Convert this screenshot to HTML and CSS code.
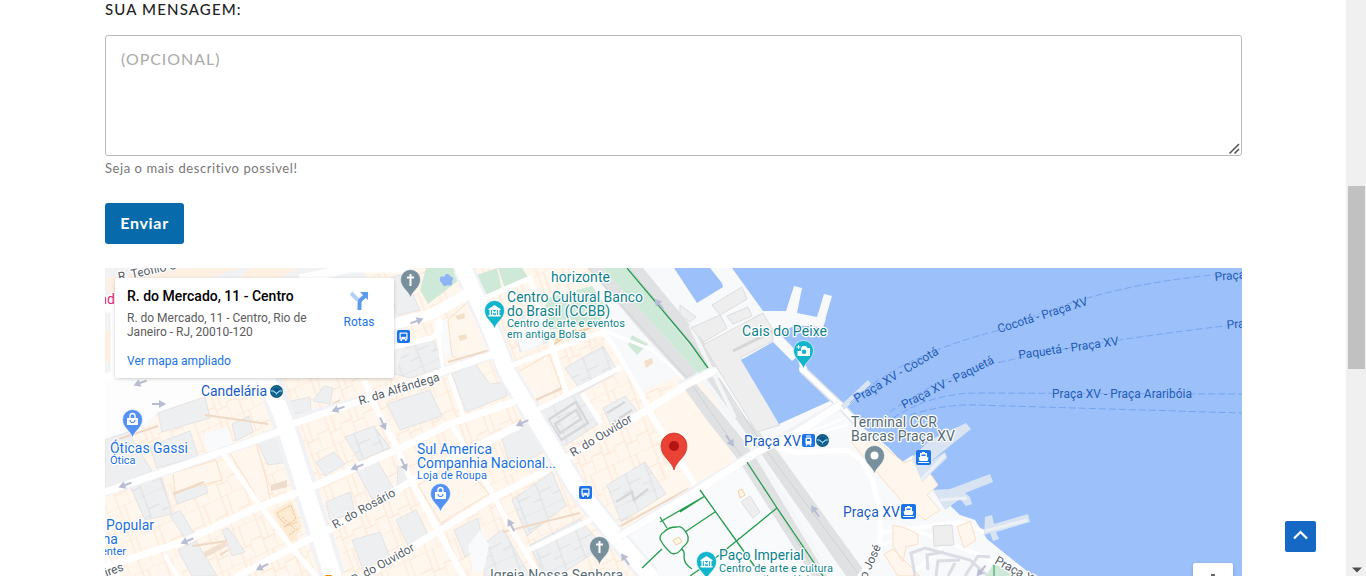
FILE: index.html
```html
<!DOCTYPE html>
<html lang="pt-BR">
<head>
<meta charset="utf-8">
<title>Contato</title>
<link rel="stylesheet" href="styles.css">
</head>
<body>
<div class="page">
<main class="content">
  <form class="form">
    <label class="label" for="msg"><span>SUA MENSAGEM:</span></label>
    <div class="field">
      <textarea class="message" id="msg" placeholder="(OPCIONAL)"></textarea>
      <svg class="grip" width="11" height="11" viewBox="0 0 11 11"><path d="M.5 10.500L10 1M5.500 10.500L10 6" stroke="#505050" stroke-width="1.500"/></svg>
    </div>
    <p class="hint">Seja o mais descritivo possivel!</p>
    <button class="submit" type="button">Enviar</button>
  </form>
  <section class="map">
    <svg class="map-canvas" viewBox="105 268 1137 308" width="1137" height="308">
      <defs>
        <pattern id="lots" width="25" height="34" patternUnits="userSpaceOnUse" patternTransform="rotate(-25) skewX(-5)">
          <path d="M0 0H25M0 18H13M13 0V34M0 18V34M19 0V22M13 22H25" class="lot-line"/>
        </pattern>
        <pattern id="lotsg" width="22" height="30" patternUnits="userSpaceOnUse" patternTransform="rotate(-25) skewX(-5)">
          <path d="M0 0H22M9 0V30M9 14H22M0 21H9" class="lot-line-g"/>
        </pattern>
        <path id="pin" d="M0 0C-1.5-7-10-10-10-18.500A10 10 0 0 1 10-18.500C10-10 1.500-7 0 0Z"/>
        <g id="bag"><path d="M-5.500-2H5.500V5H-5.500Z" fill="#fff"/><path d="M-2.500-2V-4A2.500 2.500 0 0 1 2.500-4V-2" fill="none" stroke="#fff" stroke-width="1.400"/><path d="M-2.500 0A2.500 2.500 0 0 0 2.500 0" fill="none" stroke="#5491f5" stroke-width="1.200"/></g>
        <g id="museum"><path d="M-6-2L0-6L6-2V-1H-6ZM-5-1H-3.500V4H-5ZM3.500-1H5V4H3.500ZM-6 4H6V5.500H-6Z" fill="#fff"/><path d="M-2 4V0L0 2L2 0V4" fill="none" stroke="#fff" stroke-width="1.200"/></g>
        <g id="bus"><rect x="-6.500" y="-6.500" width="13" height="13" rx="2" fill="#1a73e8"/><path d="M-4-3Q-4-4-3-4H3Q4-4 4-3V3H3V4.500H1.500V3H-1.500V4.500H-3V3H-4Z" fill="#fff"/><path d="M-2.500-2.500H2.500V0H-2.500ZM-3 1.500H-1.500M1.500 1.500H3" fill="#1a73e8" stroke="#1a73e8" stroke-width=".7"/></g>
        <g id="ferry"><rect x="-7.500" y="-7.500" width="15" height="15" rx="2" fill="#1a73e8"/><path d="M-1.500-5.500H1.500V-4.500H3.500V-.5L5 0L4 3.500H-4L-5 0L-3.500-.5V-4.500H-1.500Z" fill="#fff"/><path d="M-2-3H2V-1.500H-2Z" fill="#1a73e8"/><path d="M-5.500 5H5.500" stroke="#fff"/></g>
        <g id="metro"><circle r="6.500" fill="#0b5490"/><circle r="4.500" fill="none" stroke="#238276"/><path d="M-6-.5H-3L-1.500 1H-1L0 2.500L1 1H1.500L3-.5H6" fill="none" stroke="#9ee1f7" stroke-width="1.100"/></g>
        <path id="arr" d="M-7-1H0V-4L7 0L0 4V1H-7Z" fill="#b9bdd3"/>
        <path id="cross" d="M0-6V6M-3.500-2.500H3.500" stroke="#fff" stroke-width="2" fill="none"/>
      </defs>
      <rect x="105" y="268" width="1137" height="308" fill="#f8f9fb"/>

      <!-- city blocks -->
      <path id="city" class="peach" d="M105 440L150 425L158 412L205 396L264 380L360 268H450L590 268L603 332L640 392L690 370L718 402L735 463L625 528L665 576H105Z"/>
      <path fill="url(#lots)" d="M105 440L150 425L158 412L205 396L264 380L360 268H450L590 268L603 332L640 392L676 384L645 412L675 470L625 528L665 576H105Z"/>

      <!-- grey buildings -->
      <g class="grey">
        <path d="M105 440L128 432L152 471L105 488Z"/><path d="M158 413L205 397L210 418L162 432Z"/><path d="M150 446L190 431L198 456L157 468Z"/>
        <path d="M232 424L249 416L253 432L236 441Z"/><path d="M256 440L276 433L288 462L268 465Z"/><path d="M130 486L161 476L172 514L145 520Z"/>
        <path d="M174 492L205 484L208 493L177 504Z"/><path d="M170 516L180 510L194 534L185 538Z"/><path d="M178 550L196 541L217 576H192Z"/>
        <path d="M222 530L228 528L245 552L232 556Z"/><path d="M316 462L334 452L345 464L325 476Z"/><path d="M345 437L374 426L390 448L359 461Z"/>
        <path d="M326 502L350 492L355 513L330 520Z"/><path d="M356 470L378 462L394 489L372 499Z"/>
        <path d="M287 402L310 397L311 411L287 415Z"/><path d="M313 401L324 386L333 388L330 404Z"/><path d="M352 540L380 532L393 565L365 576Z"/>
        <path d="M395 352L432 338L445 366L410 378L395 374Z"/><path d="M387 404L430 390L442 416L400 430Z"/><path d="M452 374L475 364L490 384L505 382L507 396L466 412Z"/>
        <path d="M515 322L540 305L548 342L520 352Z"/><path d="M565 368L603 346L618 372L582 392Z"/><path d="M542 410L580 391L598 424L560 449Z"/>
        <path d="M603 408L625 396L640 414L614 432Z"/><path d="M607 485L645 462L666 494L621 522Z"/><path d="M512 500L552 472L566 505L527 536Z"/>
        <path d="M530 545L580 519L603 547L558 576H544Z"/><path d="M454 530L478 518L483 545L465 557Z"/><path d="M485 543L503 529L530 576H484Z"/>
        <path d="M396 520L416 510L429 537L409 548Z"/><path d="M398 466L407 472L408 486L397 485Z"/><path d="M500 433L529 423L545 451L511 470Z"/>
        <path d="M390 278L403 274L420 310L396 316Z"/>
      </g>
      <path fill="url(#lotsg)" d="M130 486L161 476L172 514L145 520ZM512 500L552 472L566 505L527 536ZM530 545L580 519L603 547L558 576H544ZM607 485L645 462L666 494L621 522ZM542 410L580 391L598 424L560 449ZM395 352L432 338L445 366L410 378L395 374ZM565 368L603 346L618 372L582 392ZM345 437L374 426L390 448L359 461ZM485 543L503 529L530 576H484Z"/>
      <g fill="#f8fafc">
        <path d="M204 433L228 428L233 443L208 455Z"/><path d="M468 546L480 530L489 545L484 570L474 572Z"/>
        <path d="M436 323L452 317L457 345L446 360Z"/><path d="M513 325L535 318L543 344L522 352Z"/><path d="M620 535L736 468L840 576H650Z"/>
      </g>

      <!-- plain roofs -->
      <g class="peach edge">
        <path d="M515 374L549 354L561 387L531 404Z"/><path d="M448 320L470 300L491 350L468 364L452 356Z"/><path d="M418 485L445 470L466 468L489 494L441 523Z"/>
        <path d="M228 450L255 440L266 478L270 500L260 502Z"/><path d="M173 473L216 460L222 480L175 492Z"/>
      </g>

      <!-- roof edges and courtyards -->
      <path d="M119 439L158 426M205 415L268 424M192 546L227 541M173 494L204 482M220 555L228 550M448 362L490 350M512 365L550 350M531 402L565 387M440 526L490 500M617 528L688 489M709 480L733 466M503 532L580 513M305 420L340 400" stroke="#efd9c5" stroke-width="2" fill="none"/>
      <path d="M273 512L291 501L302 526L293 543L280 526Z" fill="#fdebd3"/>
      <path d="M277 513L291 505L296 519L287 525L280 519ZM284 527L297 522M289 535L299 528M282 517L295 529" fill="none" stroke="#edc69c" stroke-dasharray="3 1"/>
      <path d="M271 485L287 480V487L271 491Z" fill="#eedccc"/><path d="M204 552L226 541L227 546L205 558Z" fill="#f2dfcf"/>
      <path d="M455 316L464 313L465 318L458 320ZM458 336L466 334L467 339L460 341ZM644 361L652 358L653 363L646 368Z" fill="#f4dfc9"/>
      <path d="M555 340L590 328M553 345L575 330L590 340" stroke="#f5cfa1" stroke-width="2" fill="none"/>
      <path d="M548 420L576 402L588 423L561 440ZM555 424L576 410L581 419L560 433ZM607 413L625 402M614 422L632 410M616 502L632 492L634 500L648 489" stroke="#d6d7d9" stroke-width="2.500" fill="none"/>

      <!-- parks -->
      <g fill="#cee9d7">
        <path d="M426 268H453L459 280L428 304L420 290Z"/><path d="M474 276L497 268L502 291L488 296Z"/><path d="M498 268H522L528 277L505 289Z"/>
        <path d="M550 297L592 286L608 310L598 322L550 330L543 310Z"/><path d="M632 335L648 344L637 355L628 345Z"/>
      </g>
      <path d="M440 278Q441 275 444 277Q447 271 450 276Q455 278 452 281Q453 287 448 285Q443 288 442 283Q439 281 440 278Z" fill="#8eb4f5"/>

      <!-- open ground at the avenue -->
      <path d="M105 378H268L256 394L205 396L158 412L140 428L105 438Z" fill="#fdfdfe"/>
      <path d="M105 268H360L410 330L394 378H105Z" fill="#f1f2f4"/>
      <path d="M105 278L175 268H240L115 310ZM250 268H300L280 278H240ZM105 330H115V360L105 363Z" fill="#fdefe2"/>
      <path d="M105 310L115 302V375L105 378M300 279L350 268H410" fill="none" stroke="#fff" stroke-width="9"/>

      <!-- streets -->
      <g class="casing">
        <path d="M268 378L282 415L303 482L333 576" stroke-width="25"/><path d="M463 268L490 328L507 372L537 422L577 488L617 538L650 576" stroke-width="21"/>
        <path d="M105 492L222 452L278 432L292 420L405 388L447 370L500 352" stroke-width="9"/>
      </g>
      <g class="street">
        <path d="M266 378L282 415L303 482L333 576" stroke-width="17"/>
        <path d="M463 268L490 328L507 372L537 422L577 488L617 538L650 576" stroke-width="16"/>
        <path d="M105 492L222 452L278 432L292 424L405 386L447 370L500 352" stroke-width="7"/>
        <path d="M105 567L185 541L258 507L305 490L397 450L450 424L513 402" stroke-width="7"/>
        <path d="M238 576L292 548L318 535L338 525L405 485L440 465L520 425" stroke-width="7"/>
        <path d="M365 576L440 530L493 498L547 470M562 461L643 412L712 370" stroke-width="7"/>
        <path d="M365 382L378 412L394 442L410 478L437 528L463 576" stroke-width="6"/>
        <path d="M453 427L493 495L513 532L540 576M527 551L590 520" stroke-width="5"/>
        <path d="M222 452L262 508L292 548L316 576" stroke-width="5"/>
        <path d="M105 555L118 576M165 556L178 576" stroke-width="4"/>
        <path d="M436 322L443 368M450 377L463 415" stroke-width="4"/>
        <path d="M390 325L430 315L475 290" stroke-width="11"/><path d="M390 348L432 338L440 330V320" stroke-width="5"/>
        <path d="M487 297L530 278L540 310L553 348L567 395M510 366L553 350L603 332L613 345L640 392L650 411M537 410L567 395L620 368M583 395L600 422" stroke-width="5"/>
        <path d="M603 330L652 350L688 382" stroke-width="3"/><path d="M650 413L695 485" stroke-width="6"/>
      </g>

      <!-- expressway -->
      <g fill="#e0e1e2">
        <path d="M588 268H602L697 372L688 382L640 330Z"/><path d="M629 268H643L690 325L712 352L716 367L708 368Z"/>
        <path d="M681 384L691 378L723 415L750 448L827 576H812L739 461L703 415Z"/><path d="M706 378L716 374L740 412L778 452L868 576H846L761 454Z"/>
      </g>
      <path d="M602 268H627L708 368L698 373Z" fill="#cee9d7"/>
      <path d="M588 268L690 381M629 268L710 366M690 382L770 497L818 576M719 378L766 450L860 576" stroke="#cfd1d3" fill="none"/>
      <path d="M700 374L765 468L830 576M690 325L735 418" stroke="#f5f6f7" stroke-width="4" fill="none"/>

      <!-- waterfront sheds -->
      <g class="shed"><path d="M703 345L763 313L772 328L773 341L741 357L780 425L757 432Z"/><path d="M712 305L742 287L747 299L720 315Z"/><path d="M727 316L748 307L752 316L733 324Z"/><path d="M691 328L720 315L727 328L704 342Z"/><path d="M680 305L696 317L690 322L680 315Z"/></g>
      <path d="M733 351L773 331" stroke="#d3d5d7" stroke-width="3"/>

      <!-- bay -->
      <g fill="#9cc0fa">
        <path d="M674 268L697 303L723 287L722 283L710 268Z"/>
        <path d="M732 268L763 311L786 311L794 286L802 288L797 313L817 317L824 294L832 296L823 327L795 325L780 334L799 354L803 366L853 420L888 447L902 462L913 455L930 486L960 515L975 520L987 539L1033 576H1242V268Z"/>
        <path d="M741 360L773 342L792 361L797 357L802 373L830 401L779 424Z"/>
      </g>
      <path d="M786 312L792 325L776 332Z" fill="#f8f9fb"/>
      <path d="M780 325L796 321L826 319L823 327L795 325L777 333Z" fill="#f8f9fb"/>
      <path d="M803 370L840 405L862 428" stroke="#dfe3e8" stroke-width="8" fill="none"/><path d="M803 370L840 405L862 428" stroke="#fff" stroke-width="5" fill="none"/><circle cx="803" cy="369" r="4" fill="#fff"/>

      <!-- lower roads -->
      <g class="casing"><path d="M620 536L757 452L840 405M680 386L712 372" stroke-width="9"/></g>
      <g class="street">
        <path d="M620 536L690 495L757 452L795 434L840 405M680 388L712 372" stroke-width="7"/>
        <path d="M780 448L798 453L847 450L862 461L872 480L880 508V548L860 576" stroke-width="5"/>
        <path d="M793 440L850 424M810 432L845 418" stroke-width="2"/>
        <path d="M985 532L960 522L885 532M880 545L920 532L980 555L1020 576M910 576L950 540" stroke-width="4"/>
      </g>

      <!-- ferry terminal -->
      <path class="peach edge" d="M852 443L866 432L903 462L920 459L938 485L927 495L940 510L925 520L904 504L880 476Z"/>
      <path class="peach edge" d="M893 525L905 528L918 534L918 544L906 547L903 562L893 546ZM884 554L893 549L920 576H898ZM957 527L970 521L976 540L964 548Z"/>
      <path class="shed" d="M933 526L952 525L954 545L934 546Z"/>
      <g fill="#d9e4f2">
        <path d="M912 458L930 440L966 423L971 429L930 462L945 452L947 458L922 482Z"/><path d="M933 490L950 489L990 474L993 482L965 493L970 497L972 504L966 506L960 499L945 510Z"/>
        <path d="M985 517L992 515L994 524L1028 514L1030 522L996 532L999 539L993 541L990 533L984 535Z"/><path d="M841 405L868 380L871 384L844 410Z"/>
      </g>
      <path d="M985 531L1027 520M940 500L967 498M921 480L945 455" stroke="#edf0f4" stroke-width="3"/>
      <path d="M915 576L911 553L925 548L970 560L988 576M928 570L927 555L944 552M936 576L938 561L960 560M965 576L978 556L990 557M948 576L955 563" fill="none" stroke="#dadde4" stroke-width="3"/>
      <path d="M986 576L994 563L1015 576Z" fill="#cee9d7"/><path d="M994 565V576" stroke="#249c4d"/>

      <!-- plaza paths -->
      <g fill="none" stroke="#249c4d" stroke-width="1.300">
        <path d="M627 268L690 343L708 368M747 462L777 508L823 576"/>
        <path d="M700 490L735 539L755 567M777 508L713 560L690 576M680 512L705 496M660 522L705 496M660 517L667 528M685 532L715 512M642 568L662 549"/>
        <path d="M664 532Q668 527 677 527Q682 525 687 534Q691 541 683 547Q677 556 671 553Q664 547 660 539Q660 534 664 532M681 549Q685 550 684 557Q684 564 692 569"/>
      </g>
      <path d="M673 540L679 537L682 542L676 545ZM738 491L742 489L745 495L740 498Z" fill="#fff5e9" stroke="#f6cf9c"/>
      <path class="shed" d="M741 502L750 496L760 512L753 518Z"/>

      <!-- ferry routes -->
      <g fill="none" stroke="#75a5f0" stroke-dasharray="7 3">
        <path d="M850 403Q900 355 1000 330Q1110 280 1242 273"/><path d="M890 412Q940 375 1010 360Q1100 340 1242 324"/>
        <path d="M893 418Q930 394 975 393L1242 394"/><path d="M910 415Q945 404 975 405L1242 413"/>
      </g>

      <use href="#arr" transform="translate(140 383) rotate(160)"/><use href="#arr" transform="translate(159 404)"/><use href="#arr" transform="translate(125 485) rotate(160)"/>
      <use href="#arr" transform="translate(187 541) rotate(158)"/><use href="#arr" transform="translate(262 567) rotate(153)"/><use href="#arr" transform="translate(338 409) rotate(160)"/>
      <use href="#arr" transform="translate(357 467) rotate(158)"/><use href="#arr" transform="translate(417 321) rotate(-20)"/><use href="#arr" transform="translate(404 465) rotate(65)"/>
      <use href="#arr" transform="translate(383 424) rotate(65)"/><use href="#arr" transform="translate(522 423) rotate(155)"/><use href="#arr" transform="translate(511 525) rotate(-118)"/>
      <use href="#arr" transform="translate(625 559) rotate(-125)"/><use href="#arr" transform="translate(730 441) rotate(55)"/><use href="#arr" transform="translate(815 511) rotate(-125)"/><use href="#arr" transform="translate(659 304) rotate(-130)"/><use href="#arr" transform="translate(981 571) rotate(130)"/>

      <!-- street names -->
      <g class="road">
        <text transform="translate(119 281) rotate(-12)" textLength="60">R. Teófilo O</text>
        <text transform="translate(360 405) rotate(-17)" textLength="84">R. da Alfândega</text>
        <text transform="translate(573 457) rotate(-31)" textLength="70">R. do Ouvidor</text>
        <text transform="translate(335 529) rotate(-29)" textLength="70">R. do Rosário</text>
        <text transform="translate(354 584) rotate(-29)" textLength="70">R. do Ouvidor</text>
        <text transform="translate(100 579) rotate(-20)">aires</text>
        <text transform="translate(861 592) rotate(-66)">São José</text>
        <text transform="translate(994 563) rotate(29)">Praça XV</text>
      </g>
      <g class="route">
        <text transform="translate(857 403) rotate(-31)" textLength="96">Praça XV - Cocotá</text>
        <text transform="translate(904 409) rotate(-27)" textLength="102">Praça XV - Paquetá</text>
        <text transform="translate(999 333) rotate(-17.500)" textLength="94">Cocotá - Praça XV</text>
        <text transform="translate(1019 359) rotate(-8)" textLength="101">Paquetá - Praça XV</text>
        <text x="1052" y="398" textLength="140">Praça XV - Praça Araribóia</text>
        <text transform="translate(1215 281) rotate(-5)">Praça XV</text><text transform="translate(1227 329) rotate(-5)">Praça XV</text>
      </g>

      <!-- places -->
      <g class="poi teal">
        <text x="551" y="282" textLength="59">horizonte</text><text x="507" y="302" textLength="136">Centro Cultural Banco</text><text x="507" y="316" textLength="103">do Brasil (CCBB)</text>
        <text class="sub" x="507" y="327" textLength="118">Centro de arte e eventos</text><text class="sub" x="507" y="338" textLength="79">em antiga Bolsa</text>
        <text x="742" y="336" textLength="85">Cais do Peixe</text><text x="719" y="560" textLength="85">Paço Imperial</text>
        <text class="sub" x="719" y="572" textLength="114">Centro de arte e cultura</text><text class="sub" x="738" y="583" textLength="77">no antigo palácio</text>
      </g>
      <g class="poi blue">
        <text x="110" y="453" textLength="78">Óticas Gassi</text><text class="sub" x="110" y="464">Ótica</text>
        <text x="417" y="454" textLength="75">Sul America</text><text x="417" y="468" textLength="139">Companhia Nacional...</text><text class="sub" x="417" y="479" textLength="70">Loja de Roupa</text>
        <text x="106" y="530" textLength="48">Popular</text><text x="118" y="544" text-anchor="end">Roma</text><text class="sub" x="126" y="555" text-anchor="end">Center</text>
      </g>
      <g class="poi transit">
        <text x="201" y="396" textLength="66">Candelária</text><text x="744" y="446" textLength="57">Praça XV</text><text x="843" y="517" textLength="57">Praça XV</text>
      </g>
      <g class="poi slate">
        <text x="851" y="427" textLength="86">Terminal CCR</text><text x="851" y="441" textLength="104">Barcas Praça XV</text><text x="490" y="580" textLength="133">Igreja Nossa Senhora</text>
      </g>
      <text class="poi pink" x="115" y="304" text-anchor="end">and</text>

      <!-- markers -->
      <g stroke="#fff" stroke-width=".6">
        <use href="#pin" x="410.5" y="298" fill="#78909c"/><use href="#pin" x="599.5" y="565" fill="#78909c"/><use href="#pin" x="874.5" y="474" fill="#78909c"/>
        <use href="#pin" x="494.5" y="329" fill="#12b5cb"/><use href="#pin" x="803.5" y="369" fill="#12b5cb"/><use href="#pin" x="706.5" y="580" fill="#12b5cb"/>
        <use href="#pin" x="132.500" y="438" fill="#5491f5"/><use href="#pin" x="440.500" y="512" fill="#5491f5"/>
      </g>
      <use href="#cross" x="410.5" y="280"/><use href="#cross" x="599.5" y="547"/><circle cx="874.5" cy="455.500" r="4" fill="#fff"/>
      <use href="#museum" x="494.5" y="311"/><use href="#museum" x="706.5" y="562"/><use href="#bag" x="132.500" y="420"/><use href="#bag" x="440.500" y="494"/>
      <path d="M801 348L802.500 346H806L807.500 348H810V356H797.500V351H801Z" fill="#fff"/><circle cx="804" cy="351.800" r="2.300" fill="#12b5cb"/><path d="M798.500 345V349M796.500 347H800.500" stroke="#fff"/>
      <use href="#bus" x="403.500" y="336.500"/><use href="#bus" x="585.500" y="492.500"/><use href="#ferry" x="923.500" y="457.500"/><use href="#ferry" x="908.500" y="511.500"/>
      <use href="#metro" x="276.500" y="391.500"/><use href="#metro" x="822.500" y="440.500"/>
      <rect x="802" y="434" width="13" height="13" rx="2" fill="#1a73e8"/><path d="M806 438H811V444H806ZM806 436H811M807 444L806 446M810 444L811 446" fill="#fff" stroke="#fff"/><path d="M807 439H810V441H807Z" fill="#1a73e8"/>
      <path d="M674 470C672 461 661 457 661 446A13 13 0 0 1 687 446C687 457 676 461 674 470Z" fill="#ea4335" stroke="#c93127" stroke-width=".7"/><circle cx="674" cy="446" r="5" fill="#b31412"/>
      <rect x="325" y="575" width="7" height="3" rx="1" fill="#ee8b00"/>
    </svg>
    <aside class="place">
      <div class="place-info">
        <h2 class="place-name">R. do Mercado, 11 - Centro</h2>
        <p class="place-address">R. do Mercado, 11 - Centro, Rio de Janeiro - RJ, 20010-120</p>
        <a class="link">Ver mapa ampliado</a>
      </div>
      <div class="directions">
        <svg width="22" height="22" viewBox="0 0 22 22"><path d="M3 4L10.500 11.500" stroke="#b5d0f8" stroke-width="4"/><path d="M11.500 21V14Q11.500 12 13 10.500L17 7" fill="none" stroke="#5e9bea" stroke-width="4"/><path d="M12 3H20V11Z" fill="#5e9bea"/></svg>
        <a class="link">Rotas</a>
      </div>
    </aside>
    <div class="zoom-control"><i class="plus"></i></div>
  </section>
</main>
<div class="scrollbar"><div class="thumb"></div><svg class="scroll-arrow" width="10" height="6" viewBox="0 0 10 6"><path d="M0 .5H10L5 5.500Z" fill="#505050"/></svg></div>
<a class="to-top"><svg width="31" height="31" viewBox="0 0 31 31"><path d="M9 17.500L15.500 11L22 17.500" fill="none" stroke="#fff" stroke-width="2.200"/></svg></a>
</div>
</body>
</html>
```

FILE: styles.css
```css
* { box-sizing: border-box; }
body { margin: 0; background: #fff; font-family: Lato, sans-serif; overflow: hidden; }
.page { display: flex; justify-content: space-between; height: 576px; position: relative; overflow: hidden; }
.content { width: 1137px; margin-left: 105px; }
.form { display: flex; flex-direction: column; align-items: flex-start; height: 268px; }
.label { height: 35px; line-height: 18px; font-size: 15px; letter-spacing: 1.15px; color: #222; font-weight: 500; }
.field { position: relative; width: 100%; }
.message { display: block; width: 100%; height: 121px; margin: 0; padding: 13px 15px; border: 1px solid #bcbcbc; border-radius: 3px; font: 16px/20px Lato, sans-serif; letter-spacing: .95px; resize: none; outline: 0; }
.message::placeholder { color: #aaa; opacity: 1; font-weight: 400; }
.grip { position: absolute; right: 2px; bottom: 2px; }
.hint { margin: 3px 0 26px; font-size: 13px; line-height: 18px; letter-spacing: .56px; color: #777; }
.submit { width: 79px; height: 41px; padding: 0 0 3px; border: 0; border-radius: 3px; background: #066aab; color: #fff; font: 700 16px Lato, sans-serif; letter-spacing: .7px; }
.map { position: relative; height: 308px; overflow: hidden; font-family: Roboto, sans-serif; }
.map-canvas { display: block; }
.peach { fill: #fff6ed; }
.edge { stroke: #fae0c5; }
.grey { fill: #eeeff0; stroke: #dfe0e2; stroke-width: .8; }
.shed { fill: #eeeeef; stroke: #dcdddf; }
.lot-line { fill: none; stroke: #fae3cd; stroke-width: .8; }
.lot-line-g { fill: none; stroke: #d9dbde; stroke-width: .8; }
.casing { fill: none; stroke: #f0f2f6; stroke-linejoin: round; }
.street { fill: none; stroke: #fff; stroke-linejoin: round; stroke-linecap: round; }
.poi, .road { font-size: 14px; paint-order: stroke; stroke: #fff; stroke-width: 2.5px; stroke-linejoin: round; }
.road { font-size: 12px; fill: #545b65; }
.route { font-size: 12px; fill: #205bb6; paint-order: stroke; stroke: #9cc0fa; stroke-width: 2px; }
.sub { font-size: 11px; }
.teal { fill: #0c828b; }
.blue { fill: #1a70e0; }
.transit { fill: #185bc8; }
.slate { fill: #566b75; }
.pink { fill: #e52574; }
.place { position: absolute; left: 10px; top: 10px; width: 279px; height: 100px; padding: 10px 12px; display: flex; justify-content: space-between; background: #fff; border-radius: 2px; box-shadow: 0 1px 4px -1px rgba(0,0,0,.3); }
.place-info { width: 200px; }
.place-name { margin: 0; font-size: 14px; line-height: 16px; font-weight: 500; color: #000; white-space: nowrap; }
.place-address { margin: 7px 0 15px; font-size: 12px; line-height: 14px; color: #5b5b5b; }
.link { display: block; color: #1a73e8; font-size: 12px; line-height: 14px; }
.directions { width: 46px; display: flex; flex-direction: column; align-items: center; gap: 4px; padding-top: 1px; }
.zoom-control { position: absolute; left: 1088px; top: 295px; width: 40px; height: 40px; padding-top: 11px; background: #fff; border-radius: 2px; box-shadow: 0 1px 4px -1px rgba(0,0,0,.3); }
.plus { display: block; width: 4px; height: 12px; margin: 0 auto; background: #666; }
.scrollbar { display: flex; flex-direction: column; justify-content: space-between; align-items: center; width: 20px; padding: 186px 1px 3px 2px; background: #f0f0f0; }
.thumb { width: 17px; height: 183px; background: #c1c1c1; }
.to-top { position: absolute; left: 1285px; top: 521px; width: 31px; height: 31px; background: #1569c4; border-radius: 2px; }
```
